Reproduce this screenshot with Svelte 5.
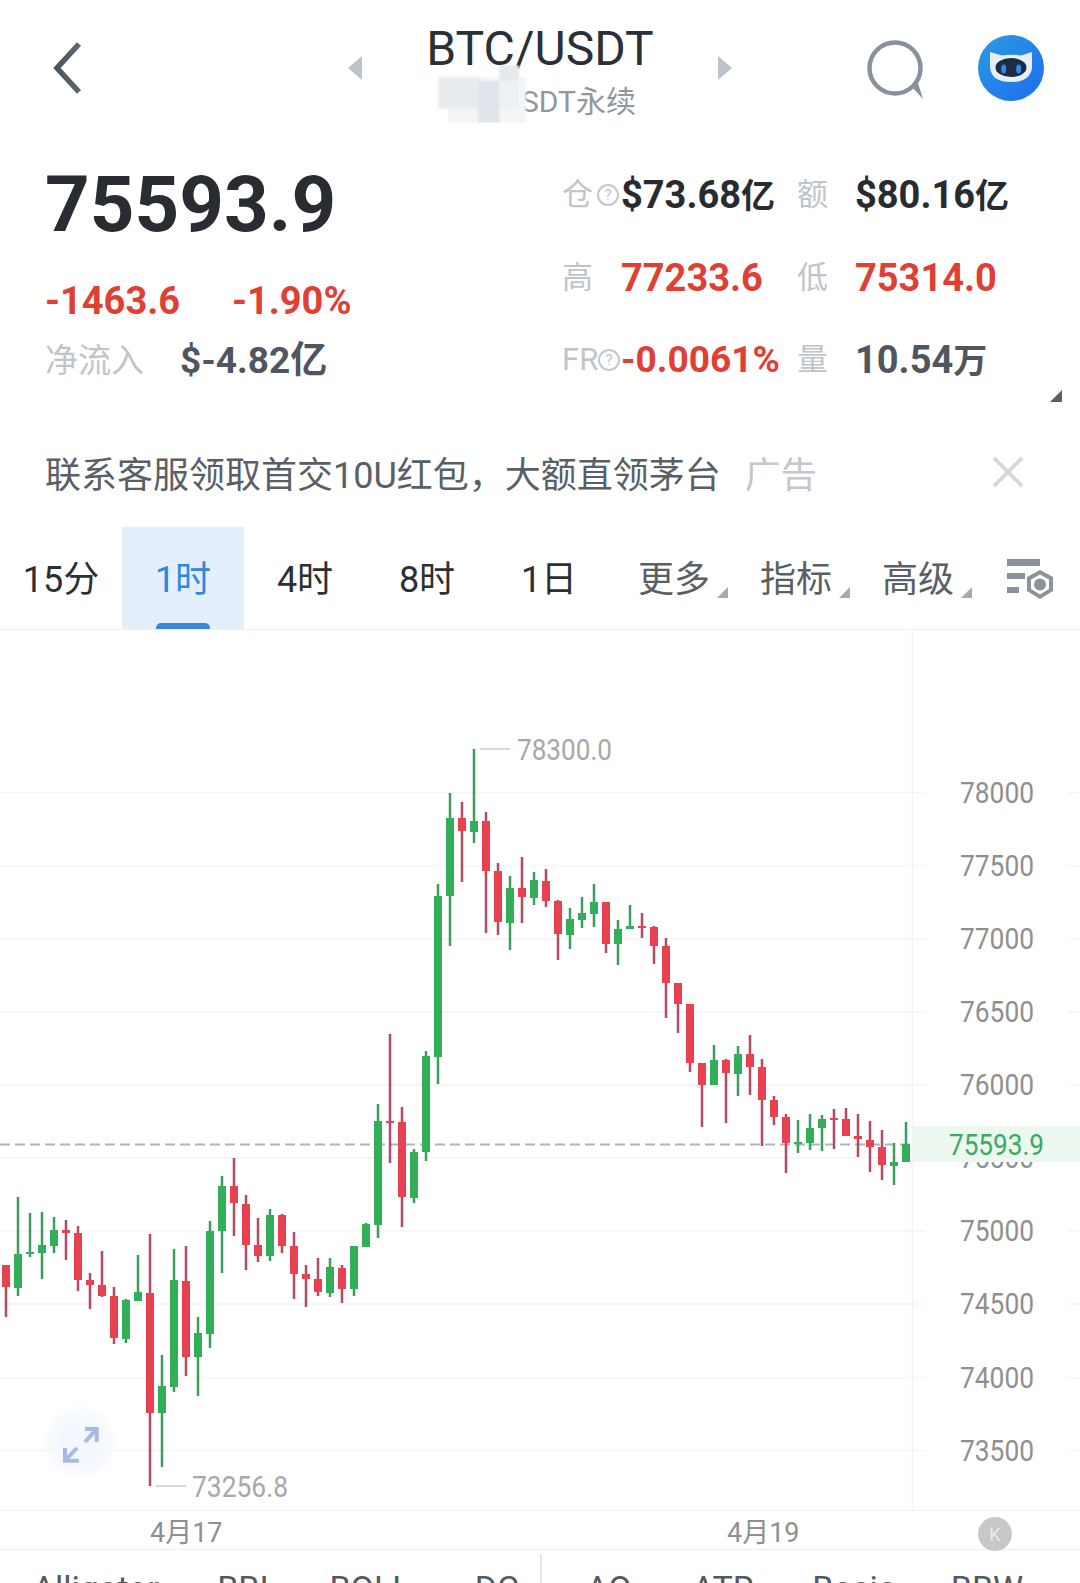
<script lang="ts">
	// BTC/USDT perpetual contract page: quote header, stats, ad strip, period tabs, candle chart

	// [wickTop, bodyTop, bodyBottom, wickBottom, up]
	const candles: [number, number, number, number, boolean][] = [
		[1265, 1265, 1287, 1317, false],
		[1197, 1254, 1288, 1296, true],
		[1213, 1252, 1254, 1257, true],
		[1212, 1245, 1253, 1279, true],
		[1217, 1230, 1246, 1253, true],
		[1220, 1230, 1233, 1260, false],
		[1226, 1233, 1280, 1291, false],
		[1273, 1280, 1285, 1309, false],
		[1251, 1285, 1296, 1297, false],
		[1287, 1296, 1338, 1344, false],
		[1299, 1300, 1339, 1343, true],
		[1255, 1292, 1301, 1301, true],
		[1234, 1293, 1413, 1486, false],
		[1355, 1386, 1413, 1467, true],
		[1249, 1280, 1387, 1392, true],
		[1246, 1281, 1357, 1376, false],
		[1317, 1333, 1357, 1396, true],
		[1221, 1231, 1334, 1348, true],
		[1176, 1186, 1231, 1273, true],
		[1158, 1186, 1203, 1236, false],
		[1195, 1204, 1245, 1270, false],
		[1218, 1245, 1256, 1262, false],
		[1209, 1215, 1256, 1261, true],
		[1214, 1215, 1246, 1253, false],
		[1232, 1246, 1274, 1299, false],
		[1265, 1274, 1279, 1307, false],
		[1258, 1279, 1292, 1296, false],
		[1258, 1267, 1293, 1297, true],
		[1265, 1268, 1289, 1303, false],
		[1246, 1246, 1289, 1296, true],
		[1223, 1224, 1247, 1247, true],
		[1104, 1121, 1225, 1238, true],
		[1034, 1121, 1122, 1163, false],
		[1107, 1122, 1197, 1227, false],
		[1149, 1152, 1198, 1203, true],
		[1051, 1056, 1152, 1161, true],
		[884, 896, 1057, 1084, true],
		[793, 818, 896, 946, true],
		[802, 818, 831, 882, false],
		[749, 821, 832, 843, true],
		[812, 821, 871, 933, false],
		[863, 871, 922, 935, false],
		[876, 888, 923, 950, true],
		[857, 888, 897, 923, false],
		[872, 880, 898, 905, true],
		[869, 881, 901, 907, false],
		[900, 901, 934, 960, false],
		[908, 919, 935, 949, true],
		[897, 913, 920, 928, true],
		[884, 902, 914, 927, true],
		[902, 902, 944, 953, false],
		[920, 929, 944, 965, true],
		[905, 926, 929, 929, true],
		[913, 926, 927, 938, false],
		[926, 927, 946, 964, false],
		[938, 946, 983, 1018, false],
		[983, 983, 1004, 1033, false],
		[1004, 1004, 1063, 1072, false],
		[1063, 1063, 1085, 1127, false],
		[1045, 1060, 1085, 1085, true],
		[1059, 1060, 1073, 1123, false],
		[1046, 1054, 1074, 1096, true],
		[1035, 1054, 1067, 1095, false],
		[1059, 1067, 1100, 1146, false],
		[1096, 1100, 1117, 1125, false],
		[1114, 1117, 1143, 1173, false],
		[1120, 1142, 1144, 1153, true],
		[1114, 1128, 1143, 1150, true],
		[1115, 1119, 1128, 1151, true],
		[1109, 1118, 1120, 1149, false],
		[1108, 1119, 1136, 1136, false],
		[1114, 1136, 1139, 1157, false],
		[1121, 1140, 1147, 1172, false],
		[1130, 1147, 1165, 1180, false],
		[1143, 1162, 1166, 1185, true],
		[1122, 1144, 1162, 1162, true]
	];

	const axis = [
		{ label: '78000', y: 792.5 },
		{ label: '77500', y: 865.5 },
		{ label: '77000', y: 939 },
		{ label: '76500', y: 1012 },
		{ label: '76000', y: 1085 },
		{ label: '75500', y: 1158 },
		{ label: '75000', y: 1231 },
		{ label: '74500', y: 1304 },
		{ label: '74000', y: 1377.5 },
		{ label: '73500', y: 1450.5 }
	];

	const periods = [
		{ label: '15分' },
		{ label: '1时', active: true },
		{ label: '4时' },
		{ label: '8时' },
		{ label: '1日' }
	];
	const menus = ['更多', '指标', '高级'];
	const indicators = ['Alligator', 'BBI', 'BOLL', 'DC', 'AO', 'ATR', 'Basic', 'BBW'];
</script>

<div class="page">
	<header class="topbar">
		<div class="side">
			<svg class="back" width="30" height="54" viewBox="0 0 30 54">
				<defs>
					<linearGradient id="backFade" x1="0" y1="0" x2="1" y2="0">
						<stop offset="0" stop-color="#4a5562" />
						<stop offset="1" stop-color="#5c6672" />
					</linearGradient>
				</defs>
				<path d="M26 3 L4 27 L26 51" fill="none" stroke="url(#backFade)" stroke-width="5.5" />
			</svg>
			<span class="arrow arrow-left"></span>
		</div>
		<div class="title">
			<div class="pair">BTC/USDT</div>
			<div class="sub">BTCUSDT永续</div>
		</div>
		<div class="side">
			<span class="arrow arrow-right"></span>
			<svg class="search" width="60" height="62" viewBox="0 0 60 62">
				<circle cx="29" cy="29" r="25.5" fill="none" stroke="#89919b" stroke-width="4.5" />
				<path d="M45 47 L57 60 L52 44 Z" fill="#89919b" />
			</svg>
			<svg class="bot" width="66" height="68" viewBox="0 0 66 68">
				<defs>
					<linearGradient id="botBg" x1="0" y1="0" x2="1" y2="1">
						<stop offset="0" stop-color="#2b9ce2" />
						<stop offset="1" stop-color="#1e6cf0" />
					</linearGradient>
				</defs>
				<circle cx="33" cy="34" r="33" fill="url(#botBg)" />
				<path d="M12 18 L24 21.5 Q33 20 43 21.5 L54 18 L54 34 Q52 48 33 48 Q14 48 12 34 Z" fill="#e8eef5" />
				<ellipse cx="33" cy="33.5" rx="15.5" ry="9.5" fill="#1c2c45" />
				<ellipse cx="25.7" cy="35" rx="2.5" ry="4.5" fill="#2a8df0" />
				<ellipse cx="40.7" cy="35" rx="2.5" ry="4.5" fill="#2a8df0" />
			</svg>
		</div>
		<svg class="mosaic" width="92" height="58" viewBox="0 0 92 58">
			<defs>
				<filter id="soft"><feGaussianBlur stdDeviation="1" /></filter>
			</defs>
			<g filter="url(#soft)">
				<rect x="2" y="12" width="88" height="46" fill="#f4f5f7" />
				<rect x="2" y="12" width="42" height="32" fill="#e9ecef" />
				<rect x="42" y="16" width="21" height="42" fill="#dfe4ea" />
				<rect x="63" y="0" width="20" height="16" fill="#e7eaed" />
				<rect x="63" y="16" width="20" height="28" fill="#eef1f4" />
				<rect x="0" y="44" width="12" height="14" fill="#ffffff" />
			</g>
		</svg>
	</header>

	<section class="quote">
		<div class="quote-main">
			<div class="last">75593.9</div>
			<div class="change">
				<span class="change-abs">-1463.6</span>
				<span>-1.90%</span>
			</div>
			<div class="flow">
				<span class="flow-label">净流入</span>
				<span class="flow-value">$-4.82亿</span>
			</div>
		</div>
		<div class="stats">
			<span class="key">仓<svg class="hint" width="24" height="24" viewBox="0 0 24 24"><circle cx="12" cy="12" r="10" fill="none" stroke="#c3c8cc" stroke-width="2" /><text x="12" y="17" text-anchor="middle" class="hint-mark">?</text></svg></span>
			<span class="val dark">$73.68<span class="unit">亿</span></span>
			<span class="key">额</span>
			<span class="val dark">$80.16<span class="unit">亿</span></span>

			<span class="key">高</span>
			<span class="val red">77233.6</span>
			<span class="key">低</span>
			<span class="val red">75314.0</span>

			<span class="key">FR<svg class="hint hint-fr" width="24" height="24" viewBox="0 0 24 24"><circle cx="12" cy="12" r="10" fill="none" stroke="#c3c8cc" stroke-width="2" /><text x="12" y="17" text-anchor="middle" class="hint-mark">?</text></svg></span>
			<span class="val red rate">-0.0061%</span>
			<span class="key">量</span>
			<span class="val slate">10.54<span class="unit">万</span></span>
			<span class="corner"></span>
		</div>
	</section>

	<div class="ad">
		<span class="ad-text">联系客服领取首交10U红包，大额直领茅台</span>
		<span class="ad-tag">广告</span>
		<svg class="ad-close" width="32" height="32" viewBox="0 0 32 32">
			<path d="M2 2 L30 30 M30 2 L2 30" stroke="#d6d8db" stroke-width="4" fill="none" />
		</svg>
	</div>

	<nav class="tabs">
		{#each periods as p}
			<div class="tab" class:active={p.active}>
				{p.label}
				{#if p.active}<span class="tab-mark"></span>{/if}
			</div>
		{/each}
		{#each menus as m}
			<div class="tab menu">{m}<span class="tri"></span></div>
		{/each}
		<svg class="tool" width="50" height="44" viewBox="0 0 50 44">
			<rect x="1" y="0" width="33" height="7" fill="#8a929c" />
			<rect x="1" y="14" width="18" height="6" fill="#8a929c" />
			<rect x="1" y="28" width="12" height="6" fill="#8a929c" />
			<path d="M34 11 L47 18 L47 32 L34 40 L21 32 L21 18 Z" fill="#8a929c" />
			<path d="M34 15.5 L43 20.5 L43 30 L34 35.5 L25 30 L25 20.5 Z" fill="#fff" />
			<circle cx="34" cy="25.5" r="6" fill="#8a929c" />
		</svg>
	</nav>

	<div class="chart">
		<svg width="1080" height="880" viewBox="0 630 1080 880">
			<defs>
				<radialGradient id="expandGlow">
					<stop offset="0.3" stop-color="#f3f7fe" />
					<stop offset="0.8" stop-color="#f7fafe" />
					<stop offset="1" stop-color="#ffffff" />
				</radialGradient>
			</defs>
			<circle cx="80" cy="1442" r="38" fill="url(#expandGlow)" />

			{#each axis as a}
				<line x1="0" x2="925" y1={a.y} y2={a.y} stroke="#f5f5f6" stroke-width="1.5" />
				<line x1="1068" x2="1080" y1={a.y} y2={a.y} stroke="#f5f5f6" stroke-width="1.5" />
			{/each}
			<line x1="912.5" x2="912.5" y1="630" y2="1510" stroke="#f3f3f4" stroke-width="1.5" />

			<path d="M85 1429 L96.7 1429 L96.7 1442 M96.7 1429 L85 1442 M65 1448 L65 1460.7 L79 1460.7 M65 1460.7 L77 1448" fill="none" stroke="#a5bbe4" stroke-width="4" />

			<line x1="0" x2="912" y1="1144.5" y2="1144.5" stroke="#b4b4b4" stroke-width="2" stroke-dasharray="10 5" />

			{#each candles as [top, open, close, bottom, up], i}
				<rect x={4.75 + i * 12} y={top} width="2.5" height={bottom - top} fill={up ? '#3f9d5f' : '#b34a64'} />
				<rect x={2 + i * 12} y={open} width="8" height={Math.max(close - open, 2)} fill={up ? '#33ae59' : '#e8414f'} />
			{/each}

			{#each axis as a}
				<text class="axis-text" x="960" y={a.y + 10} textLength="74" lengthAdjust="spacingAndGlyphs">{a.label}</text>
			{/each}
			<rect x="913" y="1126" width="167" height="36" fill="#ecf7f0" />
			<text class="last-text" x="949" y="1155" textLength="95" lengthAdjust="spacingAndGlyphs">75593.9</text>

			<line x1="480" x2="510" y1="749" y2="749" stroke="#c9c9c9" stroke-width="1.5" />
			<text class="peak-text" x="517" y="760" textLength="95" lengthAdjust="spacingAndGlyphs">78300.0</text>
			<line x1="156" x2="186" y1="1486" y2="1486" stroke="#c9c9c9" stroke-width="1.5" />
			<text class="peak-text" x="192" y="1497" textLength="96" lengthAdjust="spacingAndGlyphs">73256.8</text>
		</svg>
	</div>

	<div class="dates">
		<span class="date date-a">4月17</span>
		<span class="date date-b">4月19</span>
		<span class="k-btn">K</span>
	</div>

	<div class="indicators">
		{#each indicators as name}
			<span class="indicator">{name}</span>
		{/each}
		<span class="divider"></span>
	</div>
</div>

<style>
	:global(body) {
		margin: 0;
		background: #fff;
	}

	.page {
		position: relative;
		width: 1080px;
		height: 1583px;
		overflow: hidden;
		background: #fff;
		font-family: Roboto, 'Noto Sans CJK SC', sans-serif;
	}

	.topbar {
		position: relative;
		display: grid;
		grid-template-columns: 362px 356px 362px;
		height: 140px;
	}

	.side {
		display: flex;
		align-items: flex-start;
	}

	.back {
		margin: 41px 0 0 53px;
	}

	.arrow {
		width: 0;
		height: 0;
		margin-top: 56px;
		border-top: 12px solid transparent;
		border-bottom: 12px solid transparent;
	}

	.arrow-left {
		margin-left: auto;
		border-right: 14px solid #bcc2ca;
	}

	.arrow-right {
		border-left: 14px solid #bcc2ca;
	}

	.search {
		margin: 39px 0 0 134px;
	}

	.bot {
		margin: 34px 0 0 52px;
	}

	.title {
		text-align: center;
		white-space: nowrap;
	}

	.pair {
		height: 58px;
		padding-top: 20px;
		font-size: 48px;
		line-height: 58px;
		color: #2b3036;
	}

	.sub {
		margin-top: 2px;
		font-size: 30px;
		line-height: 44px;
		color: #8f979f;
		padding-left: 2px;
	}

	.mosaic {
		position: absolute;
		left: 436px;
		top: 65px;
	}

	.quote {
		display: flex;
		height: 290px;
		padding-top: 15px;
		box-sizing: border-box;
	}

	.quote-main {
		width: 562px;
		padding-left: 45px;
		box-sizing: border-box;
		flex: none;
	}

	.last {
		font-size: 78px;
		line-height: 100px;
		font-weight: 700;
		color: #292d32;
	}

	.change {
		display: flex;
		margin-top: 21px;
		font-size: 38px;
		line-height: 50px;
		font-weight: 700;
		color: #e03f33;
	}

	.change-abs {
		width: 187px;
	}

	.flow {
		display: flex;
		margin-top: 10px;
		line-height: 50px;
	}

	.flow-label {
		width: 135px;
		font-size: 33px;
		color: #c0c5c9;
	}

	.flow-value {
		font-size: 37px;
		font-weight: 700;
		color: #4f5660;
	}

	.stats {
		position: relative;
		display: grid;
		grid-template-columns: 59px 176px 58px 1fr;
		grid-auto-rows: 50px;
		row-gap: 32.5px;
		margin-top: 15px;
		flex: 1;
		align-items: center;
	}

	.key {
		display: flex;
		align-items: center;
		font-size: 31px;
		line-height: 50px;
		color: #c0c5c9;
		white-space: nowrap;
	}

	.hint {
		flex: none;
		margin-left: 3px;
	}

	.hint-fr {
		margin-left: -1px;
	}

	.hint-mark {
		font-size: 15px;
		fill: #c0c5c9;
	}

	.val {
		font-size: 38px;
		line-height: 50px;
		font-weight: 700;
		white-space: nowrap;
	}

	.rate {
		font-size: 37px;
	}

	.unit {
		font-size: 34px;
	}

	.dark {
		color: #282c31;
	}

	.red {
		color: #e03f33;
	}

	.slate {
		color: #4f5660;
	}

	.corner {
		position: absolute;
		left: 488px;
		top: 220px;
		width: 0;
		height: 0;
		border-left: 12px solid transparent;
		border-bottom: 12px solid #5b6068;
	}

	.ad {
		display: flex;
		align-items: center;
		height: 97px;
		padding: 0 0 14px 45px;
		box-sizing: border-box;
	}

	.ad-text {
		font-size: 36px;
		color: #5a5f66;
	}

	.ad-tag {
		margin-left: 24px;
		font-size: 36px;
		color: #c3c6ca;
	}

	.ad-close {
		margin-left: auto;
		margin-right: 56px;
	}

	.tabs {
		position: relative;
		display: flex;
		height: 103px;
		border-bottom: 1.5px solid #f0f0f1;
		box-sizing: border-box;
		align-items: stretch;
	}

	.tab {
		position: relative;
		display: flex;
		align-items: center;
		justify-content: center;
		width: 122px;
		padding-bottom: 4px;
		box-sizing: border-box;
		font-size: 36px;
		color: #2c3035;
		flex: none;
	}

	.tab.active {
		background: #e3effb;
		color: #2f87de;
	}

	.tab-mark {
		position: absolute;
		left: 34px;
		right: 34px;
		bottom: 0;
		height: 6px;
		border-radius: 5px 5px 0 0;
		background: #3a86dc;
	}

	.menu {
		color: #5a5f66;
		padding-left: 6px;
	}

	.tri {
		position: absolute;
		right: 4px;
		top: 60px;
		width: 0;
		height: 0;
		border-left: 11px solid transparent;
		border-bottom: 11px solid #a6a9ad;
	}

	.tool {
		position: absolute;
		left: 1006px;
		top: 32px;
	}

	.chart {
		height: 880px;
	}

	.chart svg {
		display: block;
	}

	.axis-text {
		font-size: 29px;
		fill: #8f8f8f;
	}

	.last-text {
		font-size: 29px;
		fill: #3aaa5e;
	}

	.peak-text {
		font-size: 29px;
		fill: #a8a8a8;
	}

	.dates {
		display: flex;
		align-items: center;
		height: 38px;
		box-sizing: content-box;
		border-top: 1.5px solid #f0f0f1;
		border-bottom: 1.5px solid #f0f0f1;
		padding-left: 150px;
	}

	.date {
		font-size: 27px;
		color: #8f8f8f;
		flex: none;
	}

	.date-a {
		width: 577px;
	}

	.date-b {
		width: 251px;
	}

	.k-btn {
		display: flex;
		align-items: center;
		justify-content: center;
		width: 34px;
		height: 34px;
		margin-top: 8px;
		border-radius: 50%;
		background: #c8c8c8;
		color: #ececec;
		font-size: 18px;
	}

	.indicators {
		position: relative;
		display: grid;
		grid-template-columns: 192px 102px 152px 102px 122px 106px 156px 110px;
		padding-top: 18px;
		font-size: 34px;
		color: #55595f;
		text-align: center;
	}

	.divider {
		position: absolute;
		left: 540px;
		top: 4px;
		width: 1.5px;
		height: 40px;
		background: #e6e6e6;
	}
</style>
